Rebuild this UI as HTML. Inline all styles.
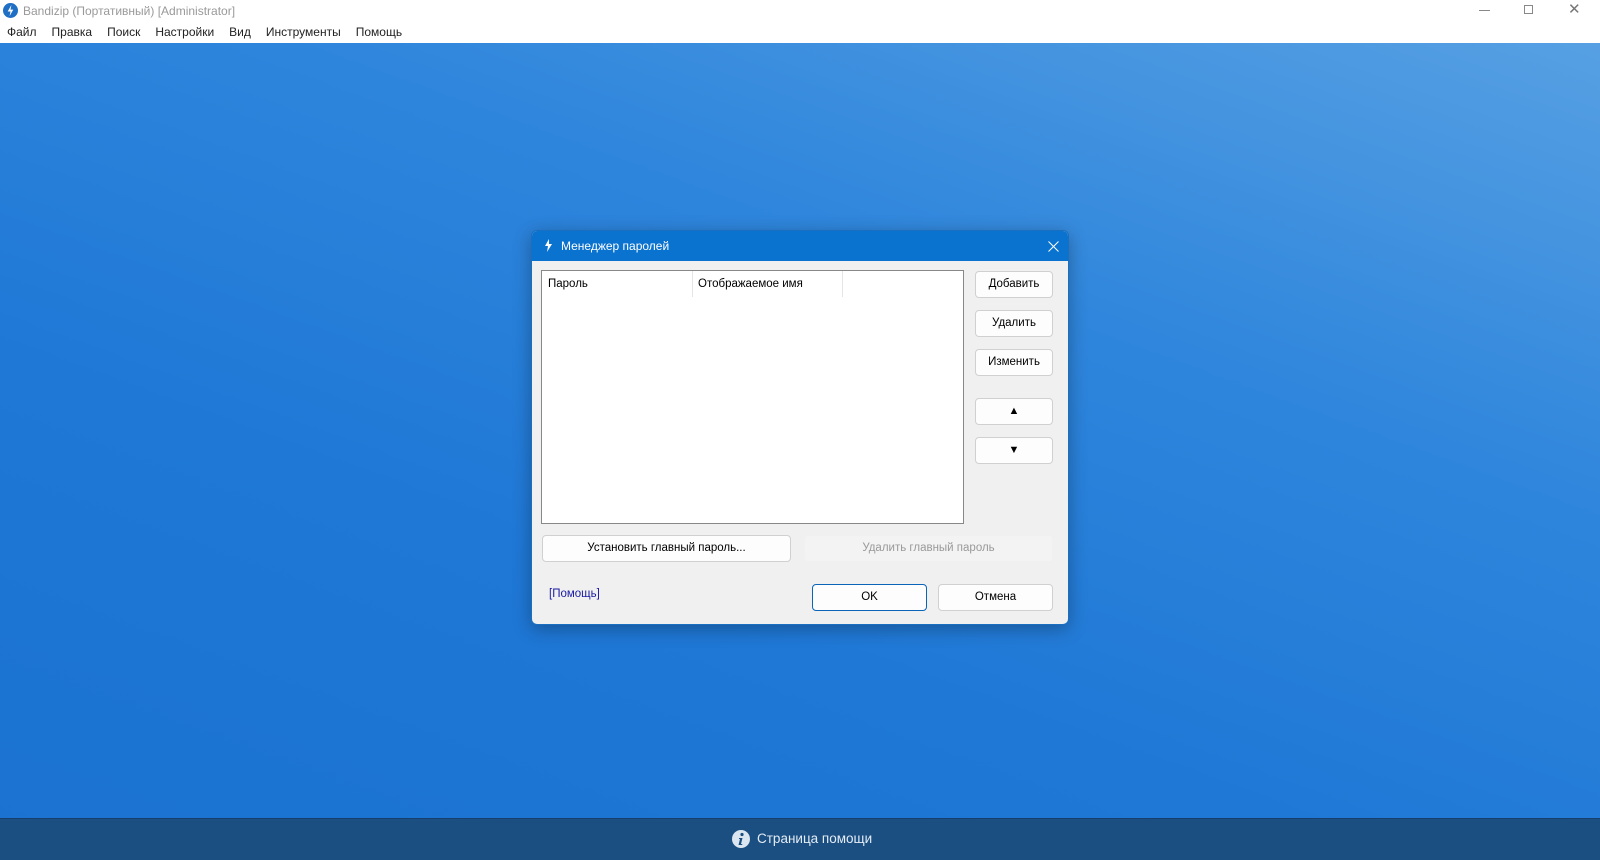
<!DOCTYPE html>
<html><head><meta charset="utf-8"><style>
*{margin:0;padding:0;box-sizing:border-box}
body{width:1600px;height:860px;overflow:hidden;position:relative;font-family:"Segoe UI","Liberation Sans","DejaVu Sans",sans-serif;font-size:11.5px;color:#000;
background:linear-gradient(200deg,#5aa2e4 0%,#2f86dc 35%,#1f78d6 65%,#1b72d0 100%)}
.top{position:absolute;left:0;top:0;width:1600px;height:43px;background:#fff}
.abs{position:absolute;white-space:nowrap}
.menu span{margin-right:15px}
.bottom{position:absolute;left:0;top:818px;width:1600px;height:42px;background:#1b4f82;border-top:1px solid #16406b}
.dlg{position:absolute;left:531px;top:230px;width:538px;height:395px;background:#f0f0f0;border-radius:6px;overflow:hidden;box-shadow:0 4px 18px rgba(0,0,0,.3);border:1px solid #1a6fc0}
.tb{height:30px;background:#0a72cf;color:#fff;font-size:12px}
.btn{position:absolute;background:#fdfdfd;border:1px solid #d0d0d0;border-radius:4px;text-align:center;font-size:11.5px;line-height:25px;height:27px}
</style></head><body>
<div class="top">
<svg class="abs" style="left:3px;top:3px" width="15" height="15" viewBox="0 0 16 16"><circle cx="8" cy="8" r="8" fill="#1f6fc5"/><path d="M9 2 L5 9 L8 9 L7 14 L11 7 L8 7 Z" fill="#fff"/></svg>
<div class="abs" style="left:23px;top:4px;color:#999;font-size:12px">Bandizip (Портативный) [Administrator]</div>
<div class="abs menu" style="left:7px;top:25px;color:#222;font-size:12px"><span>Файл</span><span>Правка</span><span>Поиск</span><span>Настройки</span><span>Вид</span><span>Инструменты</span><span>Помощь</span></div>
<div class="abs" style="left:1479px;top:10px;width:11px;border-top:1px solid #888"></div>
<div class="abs" style="left:1524px;top:5px;width:9px;height:9px;border:1px solid #888"></div>
<div class="abs" style="left:1568px;top:0px;font-size:15px;color:#777">✕</div>
</div>

<div class="dlg">
<div class="tb"><svg class="abs" style="left:12px;top:8px" width="10" height="13" viewBox="0 0 10 13"><path d="M5 0 L1 7 L4 7 L3 13 L8 5 L5 5 Z" fill="#fff"/></svg>
<div class="abs" style="left:29px;top:8px">Менеджер паролей</div>
<svg class="abs" style="left:516px;top:10px" width="11" height="11" viewBox="0 0 11 11"><path d="M0.5 0.5 L10.5 10.5 M10.5 0.5 L0.5 10.5" stroke="#fff" stroke-width="1"/></svg></div>
<div class="abs" style="left:9px;top:39px;width:423px;height:254px;background:#fff;border:1px solid #888">
<div class="abs" style="left:6px;top:7px">Пароль</div>
<div class="abs" style="left:150px;top:0;height:26px;border-left:1px solid #e5e5e5"></div>
<div class="abs" style="left:156px;top:7px">Отображаемое имя</div>
<div class="abs" style="left:300px;top:0;height:26px;border-left:1px solid #e5e5e5"></div>
</div>
<div class="btn" style="left:443px;top:40px;width:78px">Добавить</div>
<div class="btn" style="left:443px;top:79px;width:78px">Удалить</div>
<div class="btn" style="left:443px;top:118px;width:78px">Изменить</div>
<div class="btn" style="left:443px;top:167px;width:78px;font-size:11px">▲</div>
<div class="btn" style="left:443px;top:206px;width:78px;font-size:11px">▼</div>
<div class="btn" style="left:10px;top:304px;width:249px">Установить главный пароль...</div>
<div class="btn" style="left:272px;top:304px;width:249px;background:#f3f3f3;border-color:#f0f0f0;color:#999">Удалить главный пароль</div>
<div class="abs" style="left:17px;top:357px;color:#1a1aa6">[Помощь]</div>
<div class="btn" style="left:280px;top:353px;width:115px;border-color:#0a65b8">OK</div>
<div class="btn" style="left:406px;top:353px;width:115px">Отмена</div>
</div>

<div class="bottom">
<svg class="abs" style="left:732px;top:11px" width="18" height="18" viewBox="0 0 18 18"><circle cx="9" cy="9" r="9" fill="#dbe6f1"/><circle cx="10" cy="4.5" r="1.6" fill="#1b4f82"/><path d="M7 8 L10.5 8 L9 14 L10.5 14 L10 15 L6.5 15 L8 9 L7 9 Z" fill="#1b4f82"/></svg>
<div class="abs" style="left:757px;top:12px;color:#e4ecf5;font-size:13.5px">Страница помощи</div>
</div>
</body></html>
